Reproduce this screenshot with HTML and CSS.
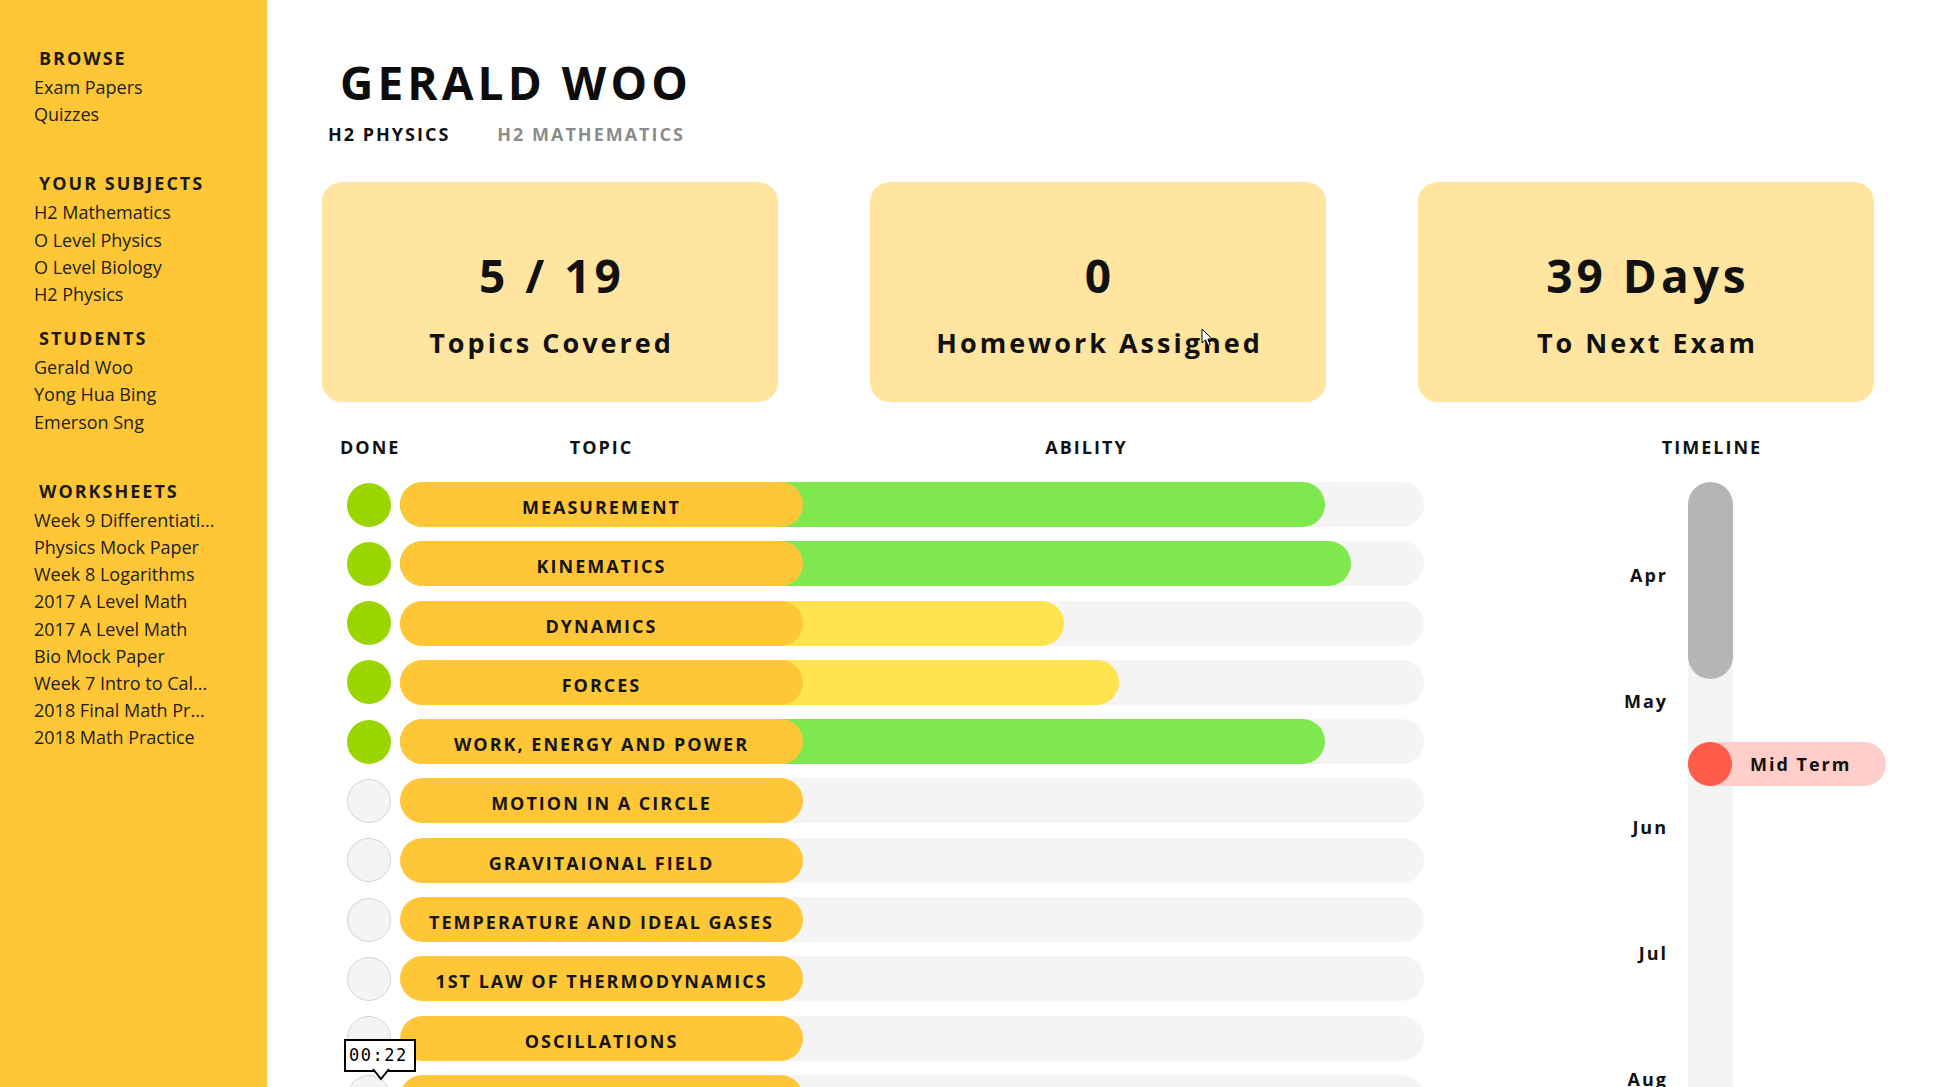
FILE: index.html
```html
<!DOCTYPE html>
<html lang="en">
<head>
<meta charset="utf-8">
<title>Gerald Woo – H2 Physics</title>
<link rel="stylesheet" href="styles.css">
</head>
<body>
<div class="app">
  <aside class="sidebar">
    <section class="nav-section">
      <h2 class="nav-heading">BROWSE</h2>
      <ul class="nav-list">
        <li>Exam Papers</li>
        <li>Quizzes</li>
      </ul>
    </section>
    <section class="nav-section">
      <h2 class="nav-heading">YOUR SUBJECTS</h2>
      <ul class="nav-list">
        <li>H2 Mathematics</li>
        <li>O Level Physics</li>
        <li>O Level Biology</li>
        <li>H2 Physics</li>
      </ul>
    </section>
    <section class="nav-section nav-section--compact">
      <h2 class="nav-heading">STUDENTS</h2>
      <ul class="nav-list">
        <li>Gerald Woo</li>
        <li>Yong Hua Bing</li>
        <li>Emerson Sng</li>
      </ul>
    </section>
    <section class="nav-section">
      <h2 class="nav-heading">WORKSHEETS</h2>
      <ul class="nav-list">
        <li>Week 9 Differentiati...</li>
        <li>Physics Mock Paper</li>
        <li>Week 8 Logarithms</li>
        <li>2017 A Level Math</li>
        <li>2017 A Level Math</li>
        <li>Bio Mock Paper</li>
        <li>Week 7 Intro to Cal...</li>
        <li>2018 Final Math Pr...</li>
        <li>2018 Math Practice</li>
      </ul>
    </section>
  </aside>

  <main class="main">
    <h1 class="student-name">GERALD WOO</h1>
    <nav class="tabs">
      <span class="tab tab--active">H2 PHYSICS</span>
      <span class="tab">H2 MATHEMATICS</span>
    </nav>

    <section class="stats">
      <div class="stat-card">
        <div class="stat-value">5 / 19</div>
        <div class="stat-label">Topics Covered</div>
      </div>
      <div class="stat-card">
        <div class="stat-value">0</div>
        <div class="stat-label">Homework Assigned</div>
      </div>
      <div class="stat-card">
        <div class="stat-value">39 Days</div>
        <div class="stat-label">To Next Exam</div>
      </div>
    </section>

    <section class="progress">
      <div class="topics">
        <div class="topics-head">
          <span class="col-done">DONE</span>
          <span class="col-topic">TOPIC</span>
          <span class="col-ability">ABILITY</span>
        </div>
        <ul class="topic-list">
          <li class="topic-row"><span class="check check--done"></span><div class="track"><span class="fill fill--high" style="width:90.3%"></span><span class="topic-pill">MEASUREMENT</span></div></li>
          <li class="topic-row"><span class="check check--done"></span><div class="track"><span class="fill fill--high" style="width:92.9%"></span><span class="topic-pill">KINEMATICS</span></div></li>
          <li class="topic-row"><span class="check check--done"></span><div class="track"><span class="fill fill--mid" style="width:64.8%"></span><span class="topic-pill">DYNAMICS</span></div></li>
          <li class="topic-row"><span class="check check--done"></span><div class="track"><span class="fill fill--mid" style="width:70.2%"></span><span class="topic-pill">FORCES</span></div></li>
          <li class="topic-row"><span class="check check--done"></span><div class="track"><span class="fill fill--high" style="width:90.3%"></span><span class="topic-pill">WORK, ENERGY AND POWER</span></div></li>
          <li class="topic-row"><span class="check check--todo"></span><div class="track"><span class="topic-pill">MOTION IN A CIRCLE</span></div></li>
          <li class="topic-row"><span class="check check--todo"></span><div class="track"><span class="topic-pill">GRAVITAIONAL FIELD</span></div></li>
          <li class="topic-row"><span class="check check--todo"></span><div class="track"><span class="topic-pill">TEMPERATURE AND IDEAL GASES</span></div></li>
          <li class="topic-row"><span class="check check--todo"></span><div class="track"><span class="topic-pill">1ST LAW OF THERMODYNAMICS</span></div></li>
          <li class="topic-row"><span class="check check--todo"></span><div class="track"><span class="topic-pill">OSCILLATIONS</span></div></li>
          <li class="topic-row"><span class="check check--todo"></span><div class="track"><span class="topic-pill"></span></div></li>
        </ul>
      </div>

      <div class="timeline">
        <div class="timeline-title">TIMELINE</div>
        <div class="timeline-body">
          <ul class="months">
            <li>Apr</li>
            <li>May</li>
            <li>Jun</li>
            <li>Jul</li>
            <li>Aug</li>
          </ul>
          <div class="tl-track">
            <span class="tl-range" style="top:0;height:197px"></span>
            <div class="tl-event" style="top:260px">
              <span class="tl-dot"></span>
              <span class="tl-label">Mid Term</span>
            </div>
          </div>
        </div>
      </div>
    </section>
  </main>
</div>

<div class="rec-timer">00:22<svg class="rec-pointer" width="20" height="12" viewBox="0 0 20 12"><polygon points="1,0 17,0 9,10" fill="#fff"/><polyline points="1,0 9,10 17,0" fill="none" stroke="#000" stroke-width="2"/></svg></div>

<svg class="cursor" width="13" height="19" viewBox="0 0 13 19"><path d="M1 1 L1 15 L4.5 11.8 L7 17.5 L9.2 16.5 L6.8 11 L11.2 11 Z" fill="#fff" stroke="#000" stroke-width="1" stroke-linejoin="round"/></svg>
</body>
</html>
```

FILE: styles.css
```css
html, body {
  margin: 0;
  padding: 0;
}

body {
  font-family: "Open Sans", "Liberation Sans", sans-serif;
  color: #111;
  background: #fff;
  overflow: hidden;
}

.app {
  display: flex;
  height: 1087px;
  overflow: hidden;
}

/* ---------- Sidebar ---------- */
.sidebar {
  width: 267px;
  flex: none;
  box-sizing: border-box;
  background: #ffc636;
  padding: 43px 0 0 34px;
}

.nav-section + .nav-section {
  margin-top: 40px;
}

.nav-section + .nav-section.nav-section--compact {
  margin-top: 15px;
}

.nav-heading {
  margin: 0 0 1px;
  padding-left: 5px;
  font-size: 18px;
  line-height: 30px;
  font-weight: 700;
  letter-spacing: 2px;
  color: #1a1a1a;
}

.nav-list {
  list-style: none;
  margin: 0;
  padding: 0;
  font-size: 18px;
  line-height: 27.2px;
  color: #222;
}

.nav-list li {
  white-space: nowrap;
}

/* ---------- Main ---------- */
.main {
  flex: 1;
  min-width: 0;
  padding: 59px 0 0 55px;
}

.student-name {
  margin: 0 0 0 18px;
  font-size: 46px;
  line-height: 46px;
  font-weight: 700;
  letter-spacing: 4.1px;
  color: #0d0d0d;
}

.tabs {
  display: flex;
  gap: 47px;
  margin: 20px 0 0 6px;
  font-size: 18px;
  line-height: 18px;
  font-weight: 700;
  letter-spacing: 2px;
}

.tab {
  color: #8c8c8c;
}

.tab--active {
  color: #111;
}

/* ---------- Stat cards ---------- */
.stats {
  display: grid;
  grid-template-columns: repeat(3, 456px);
  column-gap: 92px;
  margin-top: 39px;
}

.stat-card {
  height: 220px;
  box-sizing: border-box;
  padding-top: 70px;
  background: #ffe5a0;
  border-radius: 20px;
  text-align: center;
}

.stat-value {
  font-size: 46px;
  line-height: 46px;
  font-weight: 700;
  letter-spacing: 4px;
  padding-left: 4px;
}

.stat-label {
  margin-top: 31px;
  font-size: 27px;
  line-height: 27px;
  font-weight: 700;
  letter-spacing: 3px;
  padding-left: 3px;
}

/* ---------- Progress ---------- */
.progress {
  display: flex;
  margin-top: 36px;
}

.topics {
  margin-left: 18px;
  width: 1084px;
  flex: none;
}

.topics-head {
  display: grid;
  grid-template-columns: 58px 403px 1fr;
  column-gap: 2px;
  margin-bottom: 26px;
  font-size: 18px;
  line-height: 18px;
  font-weight: 700;
  letter-spacing: 2px;
  text-align: center;
}

.col-ability {
  padding-right: 56px;
}

.topic-list {
  list-style: none;
  margin: 0;
  padding: 0;
  display: flex;
  flex-direction: column;
  gap: 14.3px;
}

.topic-row {
  display: flex;
  align-items: center;
  height: 45px;
}

.check {
  flex: none;
  width: 44px;
  height: 44px;
  margin: 0 7px;
  box-sizing: border-box;
  border-radius: 50%;
}

.check--done {
  background: #9ad500;
}

.check--todo {
  background: #f4f4f4;
  border: 1px solid #d4d4d4;
}

.track {
  display: grid;
  margin-left: 2px;
  width: 1024px;
  height: 45px;
  border-radius: 23px;
  background: #f4f4f4;
}

.track > * {
  grid-area: 1 / 1;
}

.fill {
  justify-self: start;
  height: 45px;
  border-radius: 23px;
}

.fill--high {
  background: #80e84f;
}

.fill--mid {
  background: #ffe44f;
}

.topic-pill {
  justify-self: start;
  width: 403px;
  height: 45px;
  box-sizing: border-box;
  padding-top: 6px;
  border-radius: 23px;
  background: #ffc637;
  text-align: center;
  font-size: 18px;
  line-height: 39px;
  font-weight: 700;
  letter-spacing: 2px;
  color: #151515;
  white-space: nowrap;
}

/* ---------- Timeline ---------- */
.timeline {
  margin-left: 188px;
  width: 200px;
  flex: none;
}

.timeline-title {
  margin-bottom: 26px;
  text-align: center;
  font-size: 18px;
  line-height: 18px;
  font-weight: 700;
  letter-spacing: 2px;
}

.timeline-body {
  display: grid;
  grid-template-columns: 56px 45px;
  column-gap: 20px;
}

.months {
  list-style: none;
  margin: 0;
  padding: 29.5px 0 0;
  font-size: 18px;
  font-weight: 700;
  letter-spacing: 2px;
}

.months li {
  height: 126px;
  display: flex;
  align-items: center;
  justify-content: flex-end;
}

.tl-track {
  position: relative;
  height: 700px;
  background: #f4f4f4;
  border-radius: 23px 23px 0 0;
}

.tl-range {
  position: absolute;
  left: 0;
  right: 0;
  background: #b5b5b5;
  border-radius: 23px;
}

.tl-event {
  position: absolute;
  left: 0;
  display: flex;
  align-items: center;
  width: 198px;
  height: 44px;
  background: #ffcdca;
  border-radius: 22px;
}

.tl-dot {
  flex: none;
  width: 44px;
  height: 44px;
  border-radius: 50%;
  background: #ff5c4c;
}

.tl-label {
  margin-left: 18px;
  font-size: 18px;
  font-weight: 700;
  letter-spacing: 2px;
  white-space: nowrap;
}

/* ---------- Overlays (screen recorder) ---------- */
.rec-timer {
  position: fixed;
  left: 344px;
  top: 1039px;
  width: 72px;
  height: 33px;
  box-sizing: border-box;
  border: 2px solid #000;
  background: #fff;
  padding-left: 3px;
  font-family: "DejaVu Sans Mono", "Liberation Mono", monospace;
  font-size: 17px;
  line-height: 29px;
  letter-spacing: 1.5px;
  color: #000;
}

.rec-pointer {
  position: absolute;
  left: 26px;
  top: calc(100% - 1px);
  overflow: visible;
}

.cursor {
  position: fixed;
  left: 1201px;
  top: 328px;
}
```
